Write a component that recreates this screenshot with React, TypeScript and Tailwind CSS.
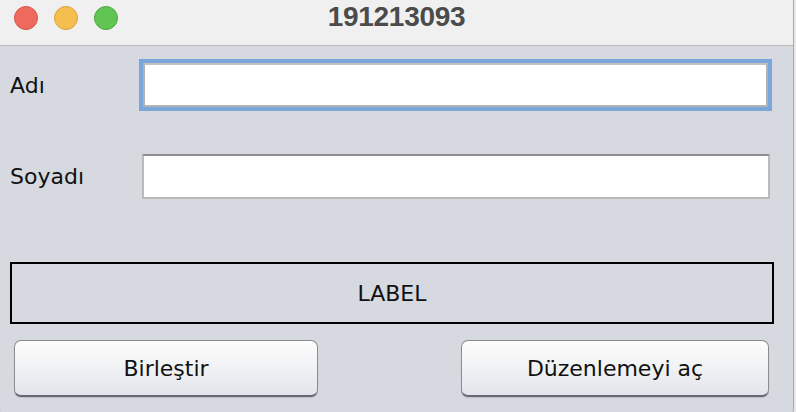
import React from "react";

const uiFont = { fontFamily: '"DejaVu Sans", "Noto Sans", sans-serif' };

function Light({ fill, ring }: { fill: string; ring: string }) {
  return <span className={`block w-[24px] h-[24px] rounded-full border ${fill} ${ring}`} />;
}

function MacButton({ label, className }: { label: string; className: string }) {
  return (
    <button
      className={`h-[57px] rounded-[7px] border border-[#8c8c8c] border-b-2 border-b-[#666a70] bg-gradient-to-b from-[#fdfdfd] via-[#f1f2f4] to-[#e1e4eb] shadow-[0_1px_1px_rgba(0,0,0,0.12)] text-[22px] text-[#111] flex items-center justify-center ${className}`}
      style={uiFont}
    >
      {label}
    </button>
  );
}

export default function App() {
  return (
    <div className="w-[796px] h-[412px] overflow-hidden bg-[#e9e9e9]">
      <div className="w-[794px] h-[424px] rounded-b-[16px] border-r border-b border-[#a9a9a9] bg-[#d6d9e0] flex flex-col overflow-hidden">
        {/* title bar */}
        <div className="relative h-[46px] shrink-0 bg-[#f0f0f0] border-b border-[#bcbcbc]">
          <div className="absolute left-[14px] top-[6px] flex gap-[16px]">
            <Light fill="bg-[#ee6a5f]" ring="border-[#d85347]" />
            <Light fill="bg-[#f5bf4f]" ring="border-[#d9a23b]" />
            <Light fill="bg-[#61c554]" ring="border-[#4ba93f]" />
          </div>
          <div
            className="pt-[3px] text-center text-[28px] leading-[28px] font-bold text-[#4b4b4b] tracking-[-0.3px]"
            style={{ fontFamily: '"Liberation Sans", Arial, sans-serif' }}
          >
            191213093
          </div>
        </div>

        {/* form */}
        <div className="pl-[10px] flex flex-col text-[22px] text-[#111]" style={uiFont}>
          <div className="mt-[13px] flex items-center h-[52px]">
            <span className="w-[129px]">Adı</span>
            <div className="w-[633px] h-[52px] border-[4px] border-[#7ba6d9] bg-white">
              <div className="h-full border-2 border-[#b2b2b2] border-t-[#c4c4c4] bg-white" />
            </div>
          </div>

          <div className="mt-[43px] flex items-center h-[45px]">
            <span className="w-[132px]">Soyadı</span>
            <div className="w-[628px] h-[45px] border-2 border-[#bababa] border-t-[#8e8e8e] bg-white" />
          </div>

          <div className="mt-[63px] w-[764px] h-[62px] border-2 border-black flex items-center justify-center">
            LABEL
          </div>

          <div className="mt-[16px] flex">
            <MacButton label="Birleştir" className="ml-[4px] w-[304px]" />
            <MacButton label="Düzenlemeyi aç" className="ml-[143px] w-[308px]" />
          </div>
        </div>
      </div>
    </div>
  );
}
